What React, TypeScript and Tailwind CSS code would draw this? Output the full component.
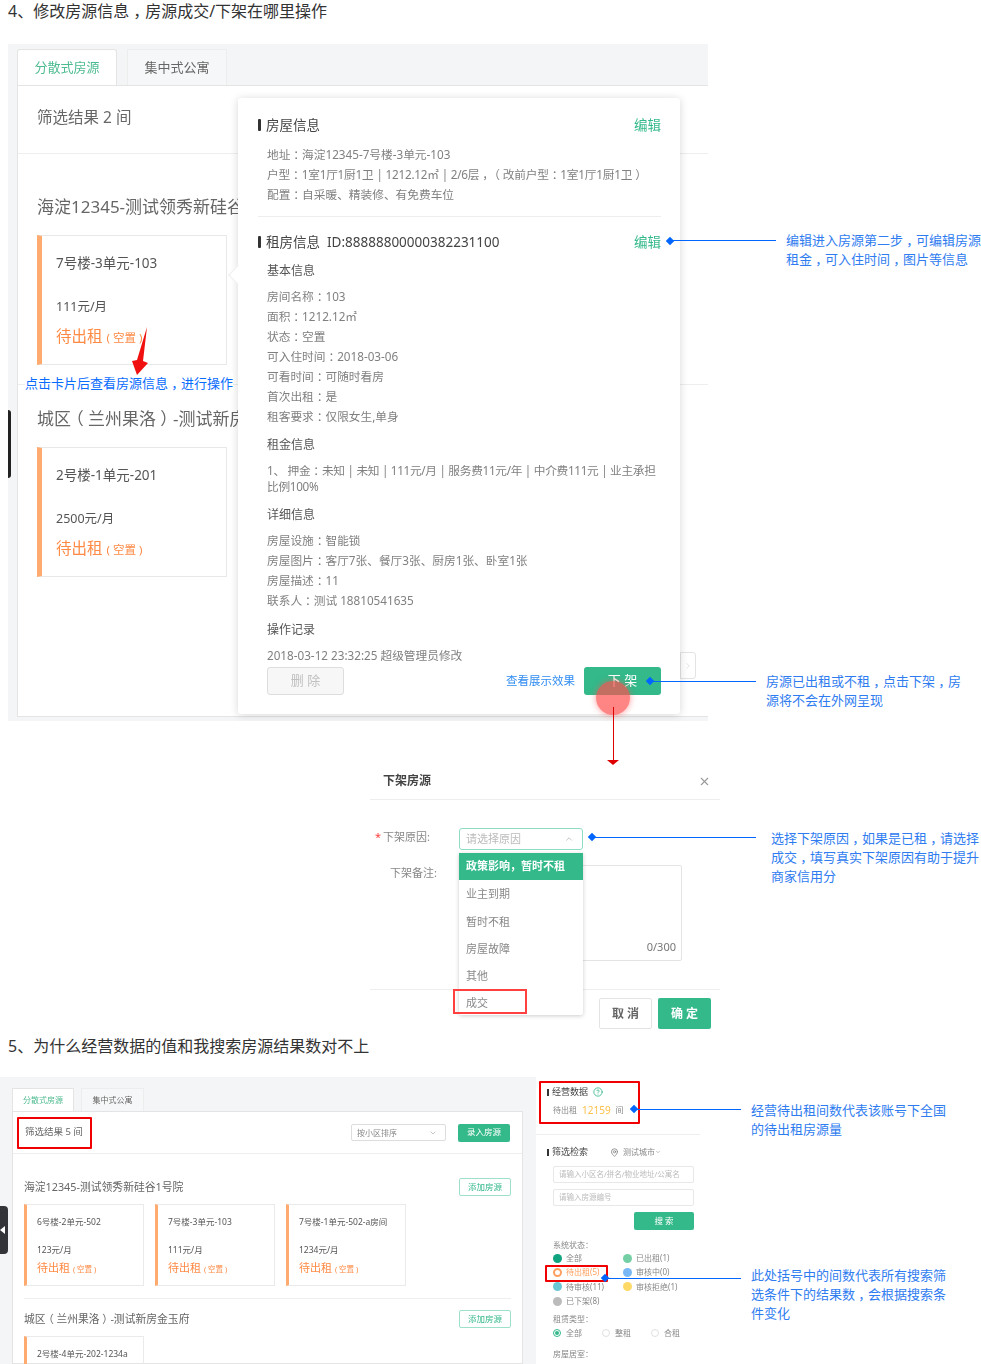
import { ChevronDown, ChevronRight, ChevronUp, CircleHelp, MapPin, X } from 'lucide-react'

const font = 'font-["Noto_Sans","Noto_Sans_CJK_SC",sans-serif]'

// the reference sets full-width punctuation in the middle of its cell, this font does not
function Zh({ children }: { children: string }) {
  return (
    <>
      {children.split(/([，：（）])/).map((part, i) =>
        i % 2 ? (
          <span key={i} className='inline-block w-[1em] text-center [font-feature-settings:"halt"]'>{part}</span>
        ) : (
          part
        ),
      )}
    </>
  )
}

function BigCard({ name, price }: { name: string; price: string }) {
  return (
    <div className="w-[190px] h-[130px] border border-[#e8e8e8] border-l-[5px] border-l-[#ffab6f] pl-[14px] pt-[17px]">
      <p className="h-5 text-[13.5px] leading-5 text-[#555]">{name}</p>
      <p className="mt-6 h-5 text-[12.5px] leading-5 text-[#555]">{price}</p>
      <p className="mt-[7px] h-6 text-[15.5px] leading-6 text-[#ff8a45]">
        待出租 <span className="text-[11.5px] text-[#ff8a45]">( 空置 )</span>
      </p>
    </div>
  )
}

function SmallCard({ name, price }: { name: string; price: string }) {
  return (
    <div className="w-[120px] h-[82px] shrink-0 border border-[#eaeaea] border-l-[3px] border-l-[#ffab6f] pl-[10px] pt-[11px]">
      <p className="h-3 text-[8.5px] leading-3 whitespace-nowrap text-[#555]">{name}</p>
      <p className="mt-4 h-3 text-[8.5px] leading-3 text-[#555]">{price}</p>
      <p className="mt-[4px] h-4 text-[11px] leading-4 text-[#ff8a45]">
        待出租 <span className="text-[7.5px]">( 空置 )</span>
      </p>
    </div>
  )
}

function Heading({ children }: { children: React.ReactNode }) {
  return (
    <div className="flex items-center justify-between h-5">
      <div className="flex items-center gap-[5px] text-[13.5px] leading-5 text-[#444]">
        <span className="w-[3px] h-3 bg-[#333] rounded-[1px]" />
        {children}
      </div>
      <span className="text-[13.5px] text-[#33b98a]">编辑</span>
    </div>
  )
}

function Lines({ items }: { items: string[] }) {
  return (
    <div className="mt-[5px] text-[11.7px] leading-5 text-[#808080]">
      {items.map((t) => (
        <p key={t} className="h-5 whitespace-nowrap"><Zh>{t}</Zh></p>
      ))}
    </div>
  )
}

const sub = 'h-5 text-[12px] leading-5 text-[#555]'

function DetailPopover() {
  return (
    <div className="absolute left-[220px] top-3 w-[442px] h-[616px] bg-white rounded-[3px] shadow-[0_1px_8px_rgba(0,0,0,0.16)] pt-[17px] pl-5 pr-[19px]">
      <span className="absolute -left-[7px] top-[170px] w-[14px] h-[14px] rotate-45 bg-white border-l border-b border-[#eeeeee]" />
      <Heading>房屋信息</Heading>
      <div className="mt-[9px] pl-[9px] pb-3 text-[11.7px] leading-5 text-[#808080]">
        <p><Zh>地址：海淀12345-7号楼-3单元-103</Zh></p>
        <p className="whitespace-nowrap tracking-[-0.2px]"><Zh>户型：1室1厅1厨1卫 | 1212.12㎡ | 2/6层，（改前户型：1室1厅1厨1卫）</Zh></p>
        <p><Zh>配置：自采暖、精装修、有免费车位</Zh></p>
      </div>
      <div className="h-px bg-[#eeeeee]" />
      <div className="mt-[15px]">
        <Heading>
          租房信息<span className="ml-[2px]">ID:88888800000382231100</span>
        </Heading>
      </div>
      <div className="pl-[9px]">
        <p className={`mt-[9px] ${sub}`}>基本信息</p>
        <Lines items={['房间名称：103', '面积：1212.12㎡', '状态：空置', '可入住时间：2018-03-06', '可看时间：可随时看房', '首次出租：是', '租客要求：仅限女生,单身']} />
        <p className={`mt-[9px] ${sub}`}>租金信息</p>
        <p className="mt-[7px] text-[11.7px] leading-4 tracking-[-0.3px] whitespace-nowrap text-[#808080]">
          <Zh>1、 押金：未知 | 未知 | 111元/月 | 服务费11元/年 | 中介费111元 | 业主承担</Zh>
          <br />
          比例100%
        </p>
        <p className={`mt-[11px] ${sub}`}>详细信息</p>
        <Lines items={['房屋设施：智能锁', '房屋图片：客厅7张、餐厅3张、厨房1张、卧室1张', '房屋描述：11', '联系人：测试 18810541635']} />
        <p className={`mt-[10px] ${sub}`}>操作记录</p>
        <Lines items={['2018-03-12 23:32:25 超级管理员修改']} />
        <div className="mt-[2px] flex items-center">
          <button className="w-[77px] h-7 bg-[#f7f7f7] border border-[#dddddd] rounded-[3px] text-[13px] text-[#c0c0c0]">删 除</button>
          <span className="ml-auto text-[11.5px] text-[#2f8cf0]">查看展示效果</span>
          <button className="ml-[9px] w-[77px] h-7 bg-[#33b98a] rounded-[3px] text-[13px] text-white">下 架</button>
        </div>
      </div>
    </div>
  )
}

function FirstShot() {
  return (
    <div className="ml-2 mt-[22px] w-[700px] h-[677px] bg-[#f4f5f6] pt-[5px] pl-[9px] overflow-hidden blur-[0.3px]">
      <div className="flex gap-[10px] h-9">
        <div className="w-[100px] h-9 flex items-center justify-center bg-white border border-b-0 border-[#e4e4e4] rounded-t-[3px] text-[13px] text-[#4dbb90]">分散式房源</div>
        <div className="w-[100px] h-9 flex items-center justify-center bg-[#f6f7f8] border border-[#eceded] border-b-0 text-[13px] text-[#666]">集中式公寓</div>
      </div>
      <div className="relative w-[720px] h-[632px] bg-white border-t border-l border-b border-[#e4e4e4]">
        <div className="h-[68px] border-b border-[#eeeeee] pl-[19px] pb-[3px] flex items-center text-[15.5px] text-[#666]">筛选结果 2 间</div>
        <div className="pl-[19px]">
          <p className="pt-[39px] h-[67px] text-[17px] leading-7 text-[#666] whitespace-nowrap">海淀12345-测试领秀新硅谷1号院</p>
          <div className="mt-[14px]">
            <BigCard name="7号楼-3单元-103" price="111元/月" />
          </div>
        </div>
        <div className="mt-[19px] border-t border-[#eeeeee] pl-[19px]">
          <p className="pt-5 h-12 text-[17px] leading-7 text-[#666] whitespace-nowrap"><Zh>城区（兰州果洛）-测试新房金玉府</Zh></p>
          <div className="mt-[14px]">
            <BigCard name="2号楼-1单元-201" price="2500元/月" />
          </div>
        </div>
        <div className="absolute left-[662px] top-[566px] w-4 h-[27px] border border-[#e4e4e4] rounded-r-[3px] flex items-center justify-center">
          <ChevronRight size={10} className="text-[#dddddd]" />
        </div>
        <DetailPopover />
      </div>
    </div>
  )
}

const reasons = ['业主到期', '暂时不租', '房屋故障', '其他', '成交']

function OfflineModal() {
  return (
    <div className="relative ml-[370px] mt-[39px] w-[350px] h-[274px] blur-[0.3px]">
      <div className="h-[40px] border-b border-[#eeeeee] pl-[13px] pt-[3px] flex items-center justify-between pr-[9px]">
        <span className="text-[12px] font-bold text-[#444]">下架房源</span>
        <X size={13} className="text-[#999]" />
      </div>
      <div className="h-[189px] pt-[28px] text-[11px] text-[#888]">
        <div className="flex h-[22px]">
          <span className="w-[13px] pl-[5px] text-[#ff4040] leading-[18px]">*</span>
          <span className="w-[76px] leading-[17px]">下架原因:</span>
          <div className="w-[124px] h-[22px] border border-[#8fdcc0] rounded-[3px] pl-[6px] pr-[8px] flex items-center justify-between text-[#bbbbbb]">
            请选择原因
            <ChevronUp size={10} className="text-[#bbbbbb]" />
          </div>
        </div>
        <div className="flex mt-[15px]">
          <span className="ml-5 w-[69px] leading-4">下架备注:</span>
          <div className="w-[223px] h-[96px] border border-[#e4e4e4] rounded-[2px] flex items-end justify-end pr-[5px] pb-[5px] text-[11px] text-[#777]">0/300</div>
        </div>
      </div>
      <div className="border-t border-[#eeeeee] pt-2 pr-[9px] flex justify-end gap-[6px]">
        <button className="w-[53px] h-[31px] border border-[#e4e4e4] rounded-[2px] text-[12px] font-bold text-[#666]">取 消</button>
        <button className="w-[53px] h-[31px] bg-[#33b98a] rounded-[2px] text-[12px] font-bold text-white">确 定</button>
      </div>
      <div className="absolute left-[89px] top-[93px] w-[124px] h-[162px] bg-white rounded-b-[2px] shadow-[0_1px_4px_rgba(0,0,0,0.2)] text-[11px] text-[#888]">
        <div className="h-[27px] pl-[7px] flex items-center bg-[#33b98a] font-bold text-white">政策影响，暂时不租</div>
        {reasons.map((r) => (
          <div key={r} className="h-[27.2px] pl-[7px] pt-[2px] flex items-center">{r}</div>
        ))}
      </div>
    </div>
  )
}

const small = 'text-[8px] leading-3 text-[#888]'

const statuses = [
  { label: '全部', color: 'bg-[#0fa37f]' },
  { label: '已出租(1)', color: 'bg-[#74d0a4]' },
  { label: '待出租(5)', color: 'bg-white border-[2px] border-[#ffa060]', text: 'text-[#ffa060]' },
  { label: '审核中(0)', color: 'bg-[#7ab8f5]' },
  { label: '待审核(11)', color: 'bg-[#6cc7d4]' },
  { label: '审核拒绝(1)', color: 'bg-[#ffd966]' },
  { label: '已下架(8)', color: 'bg-[#bbbbbb]' },
]

function StatsSidebar() {
  return (
    <div className="w-[164px] h-[287px] shrink-0 pl-[11px] bg-white">
      <div className="pt-[10px] h-[58px] border-b border-[#eeeeee] -ml-[11px] pl-[11px]">
        <div className="flex items-center gap-[3px] h-[10px] text-[9px] text-[#444]">
          <span className="w-[2px] h-[7px] bg-[#333]" />
          经营数据
          <CircleHelp size={10} className="ml-[2px] text-[#33b98a]" />
        </div>
        <div className="mt-2 ml-[6px] flex items-center h-[10px] text-[8px] text-[#888]">
          待出租<span className="ml-[5px] mr-[5px] text-[10px] text-[#ffc04a]">12159</span>间
        </div>
      </div>
      <div className="mt-[12px] flex items-center h-[10px] text-[9px] text-[#444]">
        <span className="w-[2px] h-[7px] bg-[#333] mr-[3px]" />
        筛选检索
        <MapPin size={9} className="ml-[22px] text-[#777]" />
        <span className="ml-[4px] text-[8px] text-[#888]">测试城市</span>
        <ChevronDown size={6} className="text-[#888]" />
      </div>
      <div className="ml-[6px] mt-[9px] w-[141px] text-[7.5px] text-[#bbbbbb]">
        <div className="h-[17px] border border-[#e8e8e8] rounded-[2px] pl-[5px] flex items-center whitespace-nowrap">请输入小区名/拼名/物业地址/公寓名</div>
        <div className="mt-[6px] h-[17px] border border-[#e8e8e8] rounded-[2px] pl-[5px] flex items-center">请输入房源编号</div>
        <div className="mt-[6px] ml-[81px] w-[60px] h-[18px] bg-[#33b98a] rounded-[2px] flex items-center justify-center text-[8.5px] text-white">搜 索</div>
      </div>
      <div className="ml-[6px] mt-[9px]">
        <p className={small}>系统状态：</p>
        <div className="grid grid-cols-[70px_70px] auto-rows-[14.3px]">
          {statuses.map((s) => (
            <div key={s.label} className={`flex items-center gap-[4px] text-[8px] whitespace-nowrap ${s.text ?? 'text-[#888]'}`}>
              <span className={`w-[9px] h-[9px] rounded-full ${s.color}`} />
              {s.label}
            </div>
          ))}
        </div>
        <p className={`mt-[5px] ${small}`}>租赁类型：</p>
        <div className={`mt-[2px] flex h-3 items-center ${small}`}>
          {['全部', '整租', '合租'].map((t, i) => (
            <div key={t} className="w-[50px] flex items-center gap-[5px]">
              <span className={`w-2 h-2 rounded-full border flex items-center justify-center ${i === 0 ? 'border-[#33b98a]' : 'border-[#e0e0e0]'}`}>
                {i === 0 && <span className="w-1 h-1 rounded-full bg-[#33b98a]" />}
              </span>
              {t}
            </div>
          ))}
        </div>
        <p className={`mt-[9px] ${small}`}>房屋居室：</p>
      </div>
    </div>
  )
}

function Community({ title, children, border }: { title: string; children: React.ReactNode; border?: boolean }) {
  return (
    <div className={`mr-[11px] ${border ? 'border-t border-[#eeeeee] mt-3' : ''}`}>
      <div className={`flex items-center justify-between h-[18px] ${border ? 'mt-[11px]' : 'mt-[24px]'}`}>
        <span className="text-[10.8px] text-[#666] whitespace-nowrap"><Zh>{title}</Zh></span>
        <span className="w-[52px] h-[18px] border border-[#9fe0c8] rounded-[2px] flex items-center justify-center text-[8.5px] text-[#33b98a]">添加房源</span>
      </div>
      <div className="mt-2 flex gap-[11px]">{children}</div>
    </div>
  )
}

function SecondShot() {
  return (
    <div className="mt-[19px] flex h-[287px] overflow-hidden blur-[0.4px]">
      <div className="w-[536px] shrink-0 bg-[#f4f5f6] pl-3 pt-[11px]">
        <div className="flex gap-[7px] h-[23px]">
          <div className="w-[62px] h-[23px] flex items-center justify-center bg-white border border-b-0 border-[#e4e4e4] text-[8px] text-[#4dbb90]">分散式房源</div>
          <div className="w-[63px] h-[23px] flex items-center justify-center bg-[#f6f7f8] border border-b-0 border-[#eceded] text-[8px] text-[#666]">集中式公寓</div>
        </div>
        <div className="w-[511px] h-[253px] bg-white border border-[#e4e4e4] pl-[11px]">
          <div className="h-[42px] -ml-[11px] pl-3 pr-3 border-b border-[#eeeeee] flex items-center justify-between">
            <span className="text-[9.5px] text-[#666]">筛选结果 5 间</span>
            <div className="flex items-center gap-3">
              <div className="w-[95px] h-[17px] border border-[#dddddd] rounded-[2px] pl-[5px] pr-2 flex items-center justify-between text-[8px] text-[#888]">
                按小区排序
                <ChevronDown size={8} className="text-[#aaaaaa]" />
              </div>
              <div className="w-[52px] h-[18px] bg-[#33b98a] rounded-[2px] flex items-center justify-center text-[8.5px] text-white">录入房源</div>
            </div>
          </div>
          <Community title="海淀12345-测试领秀新硅谷1号院">
            <SmallCard name="6号楼-2单元-502" price="123元/月" />
            <SmallCard name="7号楼-3单元-103" price="111元/月" />
            <SmallCard name="7号楼-1单元-502-a房间" price="1234元/月" />
          </Community>
          <Community title="城区（兰州果洛）-测试新房金玉府" border>
            <SmallCard name="2号楼-4单元-202-1234a" price="" />
          </Community>
        </div>
      </div>
      <StatsSidebar />
    </div>
  )
}

export default function App() {
  return (
    <div className={`relative w-[981px] h-[1364px] overflow-hidden bg-white ${font}`}>
      <h2 className="pl-2 h-[22px] text-[16px] leading-[22px] text-[#333]"><Zh>4、修改房源信息，房源成交/下架在哪里操作</Zh></h2>
      <FirstShot />
      <OfflineModal />
      <h2 className="pl-2 h-6 text-[16px] leading-6 text-[#333]">5、为什么经营数据的值和我搜索房源结果数对不上</h2>
      <SecondShot />

      {/* side handles */}
      <div className="absolute left-2 top-[410px] w-[3px] h-[68px] bg-[#222] rounded-r-[3px]" />
      <div className="absolute left-0 top-[1206px] w-2 h-[48px] bg-[#33343a] rounded-r-[4px] flex items-center">
        <span className="w-0 h-0 border-y-[4px] border-y-transparent border-r-[5px] border-r-white" />
      </div>

      {/* red marks */}
      <p className="absolute left-[25px] top-[373px] h-5 bg-white text-[13px] leading-5 text-[#0a6cff] whitespace-nowrap"><Zh>点击卡片后查看房源信息，进行操作</Zh></p>
      <svg className="absolute left-[130px] top-[325px]" width="20" height="52" viewBox="0 0 20 52">
        <path d="M17 2 L13 36 L18 38 L7 50 L2 36 L7 35 Z" fill="#f01010" />
      </svg>
      <div className="absolute left-[596px] top-[681px] w-[34px] h-[34px] rounded-full bg-[#ff5050]/70 shadow-[0_0_6px_rgba(255,80,80,0.6)]" />
      <div className="absolute left-[613px] top-[707px] w-px h-[54px] bg-[#e00000]" />
      <span className="absolute left-[607px] top-[760px] w-0 h-0 border-x-[6px] border-x-transparent border-t-[5px] border-t-[#e00000]" />
      <div className="absolute left-[453px] top-[989px] w-[74px] h-[25px] border-2 border-[#ff4040]" />
      <div className="absolute left-[17px] top-[1117px] w-[75px] h-[32px] border-2 border-[#f00000] rounded-[1px]" />
      <div className="absolute left-[539px] top-[1081px] w-[101px] h-[43px] border-2 border-[#f00000] rounded-[1px]" />
      <div className="absolute left-[545px] top-[1265px] w-[63px] h-[17px] border-2 border-[#f00000] rounded-[1px]" />

      {/* blue callouts */}
      <span className="absolute left-[667px] top-[238px] w-[6px] h-[6px] rotate-45 bg-[#0066ff]" />
      <div className="absolute left-[670px] top-[240px] w-[106px] h-px bg-[#0066ff]" />
      <p className="absolute left-[786px] top-[231px] w-[195px] whitespace-nowrap text-[13px] leading-[19px] text-[#2f7cf0]"><Zh>编辑进入房源第二步，可编辑房源</Zh><br /><Zh>租金，可入住时间，图片等信息</Zh></p>

      <span className="absolute left-[647px] top-[678px] w-[6px] h-[6px] rotate-45 bg-[#0066ff]" />
      <div className="absolute left-[650px] top-[681px] w-[106px] h-px bg-[#0066ff]" />
      <p className="absolute left-[766px] top-[672px] w-[198px] whitespace-nowrap text-[13px] leading-[19px] text-[#2f7cf0]"><Zh>房源已出租或不租，点击下架，房</Zh><br />源将不会在外网呈现</p>

      <span className="absolute left-[589px] top-[834px] w-[6px] h-[6px] rotate-45 bg-[#0066ff]" />
      <div className="absolute left-[592px] top-[837px] w-[164px] h-px bg-[#0066ff]" />
      <p className="absolute left-[771px] top-[829px] w-[210px] whitespace-nowrap text-[13px] leading-[19px] text-[#2f7cf0]"><Zh>选择下架原因，如果是已租，请选择</Zh><br /><Zh>成交，填写真实下架原因有助于提升</Zh><br />商家信用分</p>

      <span className="absolute left-[631px] top-[1106px] w-[6px] h-[6px] rotate-45 bg-[#0066ff]" />
      <div className="absolute left-[634px] top-[1109px] w-[107px] h-px bg-[#0066ff]" />
      <p className="absolute left-[751px] top-[1101px] w-[198px] text-[13px] leading-[19px] text-[#2f7cf0]">经营待出租间数代表该账号下全国的待出租房源量</p>

      <span className="absolute left-[602px] top-[1275px] w-[6px] h-[6px] rotate-45 bg-[#0066ff]" />
      <div className="absolute left-[605px] top-[1278px] w-[136px] h-px bg-[#0066ff]" />
      <p className="absolute left-[751px] top-[1266px] w-[198px] whitespace-nowrap text-[13px] leading-[19px] text-[#2f7cf0]">此处括号中的间数代表所有搜索筛<br /><Zh>选条件下的结果数，会根据搜索条</Zh><br />件变化</p>
    </div>
  )
}
